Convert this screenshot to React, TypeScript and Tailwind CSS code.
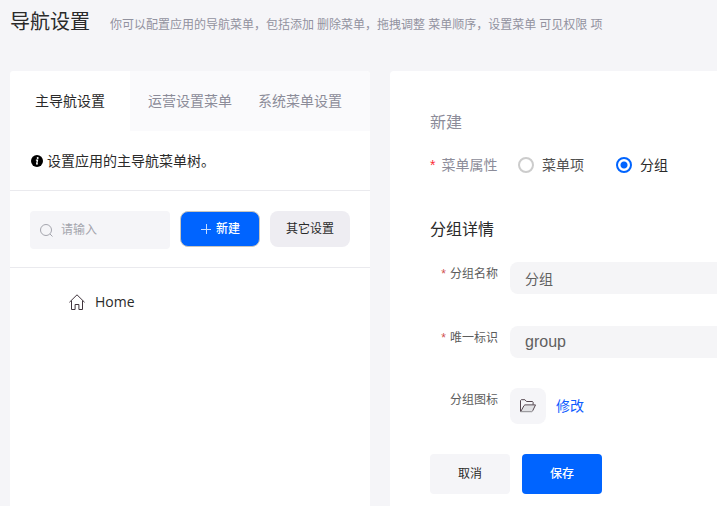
import { useState } from "react";
import type { ReactNode } from "react";

const FONT = "font-['Open_Sans','Noto_Sans_CJK_SC',sans-serif]";

function InfoIcon() {
  return (
    <svg className="size-3" viewBox="0 0 12 12" aria-hidden="true">
      <circle cx="6" cy="6" r="6" fill="#000" />
      <circle cx="6.7" cy="2.9" r="1" fill="#fff" />
      <path d="M4.9 5.1h1.6L5.7 8.9h1.2" fill="none" stroke="#fff" strokeWidth="1.3" />
    </svg>
  );
}

function SearchIcon() {
  return (
    <svg className="size-[13px] shrink-0" viewBox="0 0 13 13" fill="none" stroke="#a4a5ad" aria-hidden="true">
      <circle cx="6" cy="6" r="5.5" />
      <path d="M10 10l2.5 2.5" />
    </svg>
  );
}

function HomeIcon() {
  return (
    <svg className="size-4" viewBox="0 0 16 16" fill="none" stroke="#40343c" aria-hidden="true">
      <path d="M.4 8.3L8 .8l7.6 7.5M2.5 6.6v8.9h3.6v-5h3.8v5h3.6V6.6" />
    </svg>
  );
}

function FolderIcon() {
  return (
    <svg className="h-4 w-4" viewBox="0 0 16 16" fill="none" aria-hidden="true">
      <path d="M4.4 7.4h10.8l-2.9 6H1.2z" fill="#e2e2e5" />
      <path d="M.5 13.5v-11l.8-.8h3.6l1.6 1.8h6l.6.6v2.6" stroke="#55474f" />
      <path d="M.8 13.5L4 7.6l.9-.7h10.6l-2.8 5.9" stroke="#55474f" />
      <path d="M.5 13.7h11.4l.9-.9" stroke="#8c8a8e" />
    </svg>
  );
}

function RadioOption(props: {
  label: string;
  checked: boolean;
  onSelect: () => void;
  dark?: boolean;
}) {
  return (
    <label className={`flex items-center gap-2 ${props.dark ? "text-[#2a2a2a]" : "text-[#505050]"}`}>
      <input
        type="radio"
        name="menu-kind"
        checked={props.checked}
        onChange={props.onSelect}
        className="size-4 appearance-none rounded-full border-2 border-[#ccc] bg-white checked:border-[#0064ff] checked:bg-[radial-gradient(circle,#0064ff_3px,transparent_4px)]"
      />
      {props.label}
    </label>
  );
}

function FieldLabel(props: { htmlFor: string; required?: boolean; children: ReactNode }) {
  return (
    <label
      htmlFor={props.htmlFor}
      className="flex w-[68px] shrink-0 justify-end gap-1 pt-0.5 text-xs leading-5 text-[#5c5c5c]"
    >
      {props.required && (
        <span className="font-['Liberation_Sans',sans-serif] text-[#d05050]">*</span>
      )}
      {props.children}
    </label>
  );
}

const FIELD =
  "h-8 min-w-0 flex-1 rounded-l-lg bg-[#f5f5f7] px-[15px] text-[#606060] outline-none";

export default function App() {
  const [kind, setKind] = useState("group");
  return (
    <div className={`flex min-h-screen flex-col overflow-x-hidden bg-[#f5f5f8] text-sm text-[#2a2a2a] ${FONT}`}>
      <header className="flex h-[71px] items-start gap-5 pl-2.5 whitespace-nowrap">
        <h1 className="pt-1.5 text-xl leading-8">导航设置</h1>
        <p className="pt-[15px] text-xs leading-5 text-[#92929f]">
          你可以配置应用的导航菜单，包括添加 删除菜单，拖拽调整 菜单顺序，设置菜单 可见权限 项
        </p>
      </header>

      <div className="flex flex-1 gap-5 pl-2.5">
        <section className="flex w-[360px] shrink-0 flex-col overflow-hidden rounded-t bg-white">
          <nav className="flex bg-[#fafafc] text-[#8c8c99]">
            <button className="h-[60px] w-[120px] bg-white text-[#2a2a2a]">主导航设置</button>
            <div className="flex pl-[5px]">
              <button className="h-[60px] px-[13px]">运营设置菜单</button>
              <button className="h-[60px] px-[13px]">系统菜单设置</button>
            </div>
          </nav>
          <p className="flex h-[60px] items-center gap-1 border-b border-[#eaeaee] pl-[21px]">
            <InfoIcon />
            设置应用的主导航菜单树。
          </p>
          <div className="flex items-start gap-2.5 border-b border-[#eaeaee] px-5 pt-5 pb-[18px]">
            <label className="flex h-[38px] w-[140px] items-center gap-2 rounded bg-[#f5f5f8] px-2.5">
              <SearchIcon />
              <input
                type="text"
                aria-label="搜索菜单"
                placeholder="请输入"
                className="w-full min-w-0 bg-transparent text-xs outline-none placeholder:text-[#a4a5ad]"
              />
            </label>
            <button className="flex h-9 w-20 items-center justify-center gap-1 rounded-lg border border-[#c9c5bd] bg-[#0064ff] text-xs font-medium text-white">
              <svg className="size-3" viewBox="0 0 12 12" fill="none" stroke="#c5dcff" aria-hidden="true">
                <path d="M1 6.5h10M6.5 1v10" />
              </svg>
              新建
            </button>
            <button className="h-9 w-20 rounded-lg bg-[#eeedf2] text-xs">其它设置</button>
          </div>
          <ul className="pt-6">
            <li className="flex h-5 items-center gap-2.5 pl-[59px]">
              <HomeIcon />
              <a href="#home" className="leading-5">Home</a>
            </li>
          </ul>
        </section>

        <form
          className="min-w-0 flex-1 rounded-tl bg-white pl-10"
          onSubmit={(event) => event.preventDefault()}
        >
          <h2 className="pt-[39px] text-base leading-6 text-[#8c8c99]">新建</h2>
          <div role="radiogroup" aria-labelledby="menu-kind-label" className="mt-[21px] flex h-5 items-center">
            <div className="flex w-[88px] gap-1.5 text-[#8c8c99]">
              <span className="font-['Liberation_Sans',sans-serif] text-red-500">*</span>
              <span id="menu-kind-label">菜单属性</span>
            </div>
            <div className="flex gap-8">
              <RadioOption label="菜单项" checked={kind === "item"} onSelect={() => setKind("item")} />
              <RadioOption label="分组" dark checked={kind === "group"} onSelect={() => setKind("group")} />
            </div>
          </div>
          <h3 className="mt-[42px] text-base leading-6">分组详情</h3>

          <div className="mt-[21px] flex gap-3">
            <FieldLabel htmlFor="group-name" required>分组名称</FieldLabel>
            <input id="group-name" type="text" defaultValue="分组" className={`${FIELD} text-sm`} />
          </div>
          <div className="mt-8 flex gap-3">
            <FieldLabel htmlFor="group-id" required>唯一标识</FieldLabel>
            <input
              id="group-id"
              type="text"
              defaultValue="group"
              className={`${FIELD} font-['Liberation_Sans',sans-serif] text-base`}
            />
          </div>
          <div className="mt-[30px] flex gap-3">
            <FieldLabel htmlFor="group-icon">分组图标</FieldLabel>
            <div className="flex items-center gap-2.5">
              <span className="flex size-9 items-center justify-center rounded-lg bg-[#f5f5f8]">
                <FolderIcon />
              </span>
              <button id="group-icon" type="button" className="text-[#0f5cff]">修改</button>
            </div>
          </div>
          <div className="mt-[30px] flex gap-3 pb-3 text-xs">
            <button type="button" className="h-10 w-20 rounded bg-[#f5f5f8]">取消</button>
            <button type="submit" className="h-10 w-20 rounded bg-[#0064ff] font-medium text-white">保存</button>
          </div>
        </form>
      </div>
    </div>
  );
}
